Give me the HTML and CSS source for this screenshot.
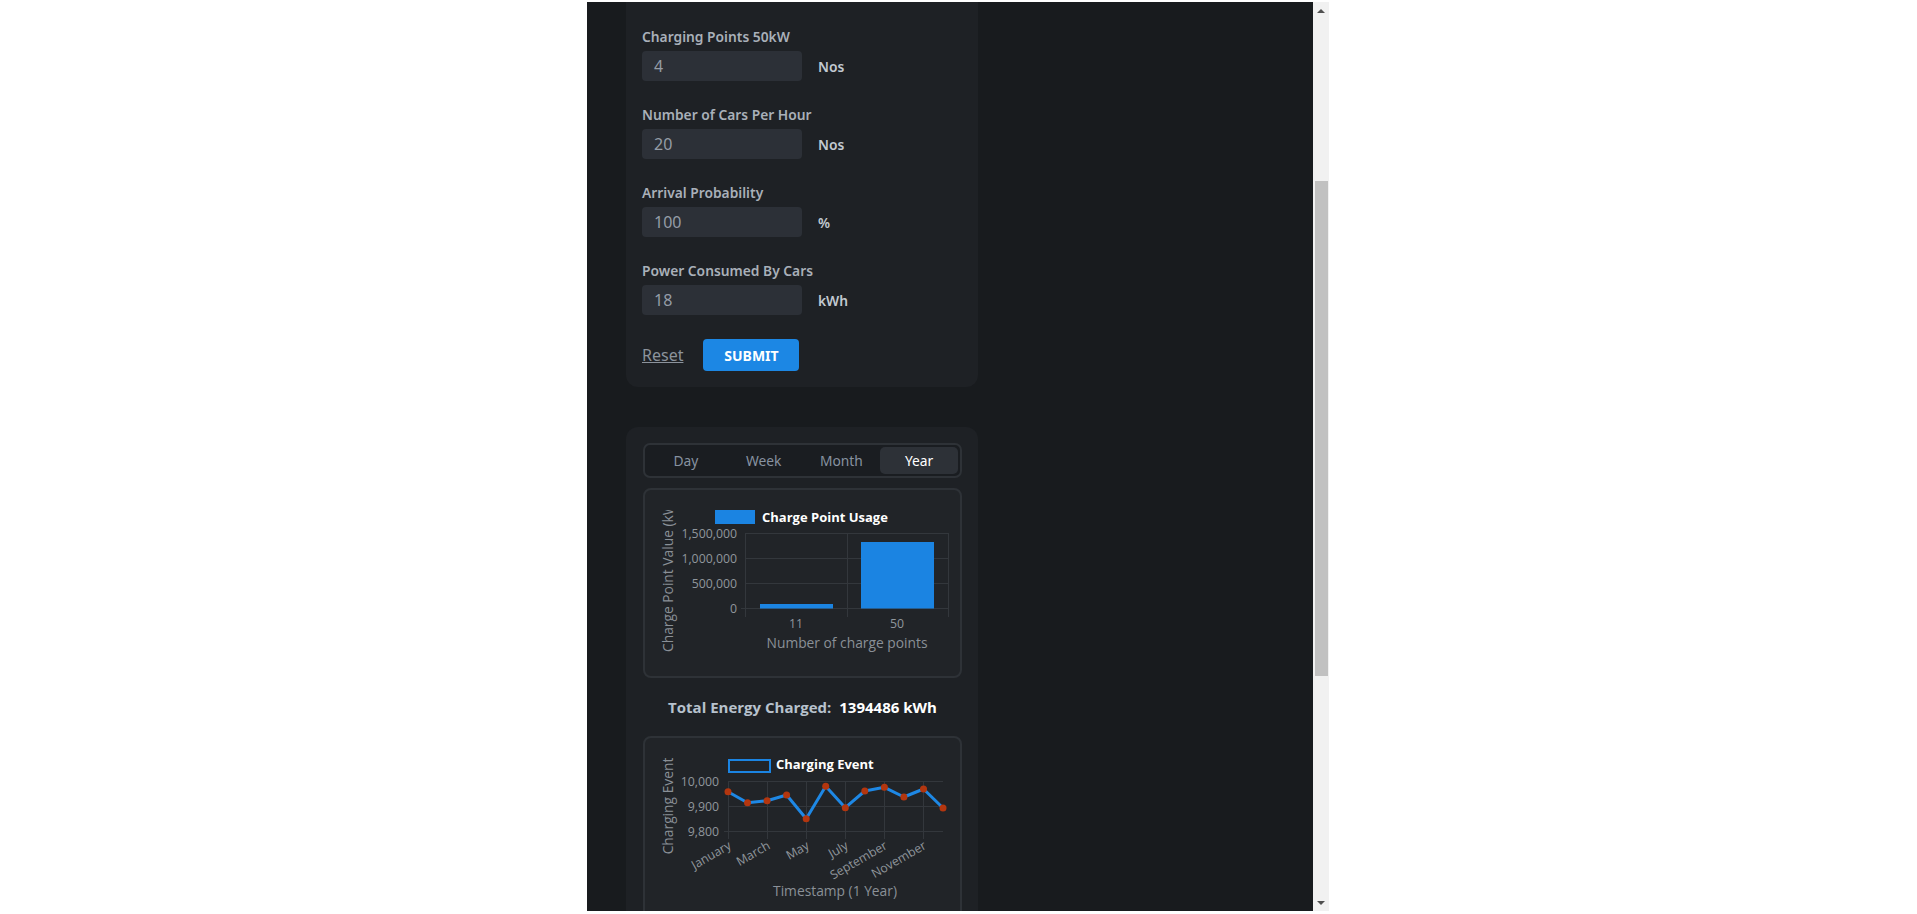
FILE: index.html
```html
<!DOCTYPE html>
<html lang="en">
<head>
<meta charset="utf-8">
<title>Charging Simulation</title>
<link rel="stylesheet" href="styles.css">
</head>
<body>
<div class="frame">
  <div class="viewport">
    <div class="column">
      <section class="card form-card">
        <div class="field">
          <label class="field-label">Charging Points 50kW</label>
          <div class="field-row"><div class="input">4</div><span class="unit">Nos</span></div>
        </div>
        <div class="field">
          <label class="field-label">Number of Cars Per Hour</label>
          <div class="field-row"><div class="input">20</div><span class="unit">Nos</span></div>
        </div>
        <div class="field">
          <label class="field-label">Arrival Probability</label>
          <div class="field-row"><div class="input">100</div><span class="unit">%</span></div>
        </div>
        <div class="field">
          <label class="field-label">Power Consumed By Cars</label>
          <div class="field-row"><div class="input">18</div><span class="unit">kWh</span></div>
        </div>
        <div class="actions">
          <a class="reset" href="#">Reset</a>
          <button class="submit" type="button">SUBMIT</button>
        </div>
      </section>

      <section class="card results-card">
        <div class="tabs">
          <div class="tab">Day</div>
          <div class="tab">Week</div>
          <div class="tab">Month</div>
          <div class="tab active">Year</div>
        </div>

        <div class="chart-box">
          <svg class="chart" width="315" height="186" viewBox="0 0 315 186">
            <defs>
              <clipPath id="ytclip"><rect x="0" y="20" width="60" height="170"/></clipPath>
            </defs>
            <rect x="70" y="20" width="40" height="14" fill="#1b84e2"/>
            <text x="117" y="31.5" class="legend">Charge Point Usage</text>
            <g clip-path="url(#ytclip)">
              <text class="axis-title" transform="translate(28,162) rotate(-90)">Charge Point Value (kWh)</text>
            </g>
            <g class="grid">
              <line x1="100" y1="43.5" x2="303" y2="43.5"/>
              <line x1="100" y1="68.5" x2="303" y2="68.5"/>
              <line x1="100" y1="93.5" x2="303" y2="93.5"/>
              <line x1="96" y1="118.5" x2="303" y2="118.5"/>
              <line x1="100.5" y1="43" x2="100.5" y2="127"/>
              <line x1="202.5" y1="43" x2="202.5" y2="127"/>
              <line x1="303.5" y1="43" x2="303.5" y2="127"/>
            </g>
            <g class="tick" text-anchor="end">
              <text x="92" y="47.5">1,500,000</text>
              <text x="92" y="72.5">1,000,000</text>
              <text x="92" y="97.5">500,000</text>
              <text x="92" y="122.5">0</text>
            </g>
            <rect x="115" y="114" width="73" height="4.5" fill="#1b84e2"/>
            <rect x="216" y="52" width="73" height="66.5" fill="#1b84e2"/>
            <g class="tick" text-anchor="middle">
              <text x="151" y="137.5">11</text>
              <text x="252" y="137.5">50</text>
            </g>
            <text class="axis-title" x="202" y="158" text-anchor="middle">Number of charge points</text>
          </svg>
        </div>

        <p class="total"><span class="total-label">Total Energy Charged:</span> <span class="total-value">1394486 kWh</span></p>

        <div class="chart-box chart-box-2">
          <svg class="chart" width="315" height="186" viewBox="0 0 315 186">
            <rect x="84" y="22" width="41" height="12" fill="none" stroke="#1b84e2" stroke-width="2"/>
            <text x="131" y="30.5" class="legend">Charging Event</text>
            <text class="axis-title" transform="translate(28,68) rotate(-90)" text-anchor="middle">Charging Event</text>
            <g class="grid">
              <line x1="83" y1="43.5" x2="298" y2="43.5"/>
              <line x1="83" y1="68.5" x2="298" y2="68.5"/>
              <line x1="79" y1="93.5" x2="298" y2="93.5"/>
              <line x1="83.5" y1="43" x2="83.5" y2="101"/>
              <line x1="122.5" y1="43" x2="122.5" y2="101"/>
              <line x1="161.5" y1="43" x2="161.5" y2="101"/>
              <line x1="200.5" y1="43" x2="200.5" y2="101"/>
              <line x1="239.5" y1="43" x2="239.5" y2="101"/>
              <line x1="278.5" y1="43" x2="278.5" y2="101"/>
            </g>
            <g class="tick" text-anchor="end">
              <text x="74" y="47.5">10,000</text>
              <text x="74" y="72.5">9,900</text>
              <text x="74" y="97.5">9,800</text>
            </g>
            <polyline class="series" points="83,53.7 102.5,64.7 122.1,62.7 141.6,57 161.2,80.7 180.7,48.3 200.3,69.7 219.8,53 239.4,49.3 258.9,59 278.5,51 298,70"/>
            <g class="dots">
              <circle cx="83" cy="53.7" r="3.5"/>
              <circle cx="102.5" cy="64.7" r="3.5"/>
              <circle cx="122.1" cy="62.7" r="3.5"/>
              <circle cx="141.6" cy="57" r="3.5"/>
              <circle cx="161.2" cy="80.7" r="3.5"/>
              <circle cx="180.7" cy="48.3" r="3.5"/>
              <circle cx="200.3" cy="69.7" r="3.5"/>
              <circle cx="219.8" cy="53" r="3.5"/>
              <circle cx="239.4" cy="49.3" r="3.5"/>
              <circle cx="258.9" cy="59" r="3.5"/>
              <circle cx="278.5" cy="51" r="3.5"/>
              <circle cx="298" cy="70" r="3.5"/>
            </g>
            <g class="tick" text-anchor="end">
              <text transform="translate(87,110) rotate(-30)">January</text>
              <text transform="translate(126,110) rotate(-30)">March</text>
              <text transform="translate(165,110) rotate(-30)">May</text>
              <text transform="translate(204,110) rotate(-30)">July</text>
              <text transform="translate(243,110) rotate(-30)">September</text>
              <text transform="translate(282,110) rotate(-30)">November</text>
            </g>
            <text class="axis-title" x="190" y="158" text-anchor="middle">Timestamp (1 Year)</text>
          </svg>
        </div>
      </section>
    </div>
  </div>
  <div class="scrollbar">
    <div class="sb-btn"><span class="arrow-up"></span></div>
    <div class="sb-track"><div class="sb-thumb"></div></div>
    <div class="sb-btn"><span class="arrow-down"></span></div>
  </div>
</div>
</body>
</html>
```

FILE: styles.css
```css
html, body {
  margin: 0;
  padding: 0;
  background: #ffffff;
}

body {
  font-family: "Noto Sans", "Open Sans", sans-serif;
}

.frame {
  display: flex;
  width: 742px;
  height: 909px;
  margin: 2px 0 0 587px;
  overflow: hidden;
}

.viewport {
  flex: 1;
  background: #181b1e;
  padding-left: 39px;
  overflow: hidden;
}

.column {
  width: 352px;
  display: flex;
  flex-direction: column;
  gap: 40px;
}

.card {
  background: #1e2125;
  border-radius: 12px;
}

.form-card {
  border-radius: 0 0 12px 12px;
  padding: 25px 16px 16px;
}

.field {
  display: flex;
  flex-direction: column;
  gap: 4px;
  margin-bottom: 24px;
}

.field-label {
  font-family: "Noto Sans", sans-serif;
  font-weight: 600;
  font-size: 13.8px;
  line-height: 20px;
  color: #a9b0b9;
}

.field-row {
  display: flex;
  align-items: center;
  gap: 16px;
}

.input {
  box-sizing: border-box;
  width: 160px;
  height: 30px;
  padding-left: 12px;
  background: #2c3037;
  border-radius: 4px;
  color: #959da7;
  font-family: "Noto Sans", sans-serif;
  font-size: 16px;
  line-height: 30px;
}

.unit {
  font-family: "Noto Sans", sans-serif;
  font-weight: 600;
  font-size: 13.8px;
  color: #c2c9d1;
}

.actions {
  display: flex;
  align-items: center;
  gap: 20px;
}

.reset {
  font-family: "Noto Sans", sans-serif;
  font-size: 16px;
  color: #8c939c;
  text-decoration: underline;
}

.submit {
  width: 96px;
  height: 32px;
  border: none;
  border-radius: 4px;
  background: #1c87e4;
  color: #ffffff;
  font-family: "Noto Sans", sans-serif;
  font-weight: 700;
  font-size: 14px;
  padding: 0;
}

.results-card {
  padding: 16px 16px 40px 17px;
}

.tabs {
  box-sizing: border-box;
  width: 319px;
  height: 35px;
  display: flex;
  padding: 2px;
  border: 2px solid #2e3237;
  border-radius: 7px;
  background: #1a1d21;
}

.tab {
  flex: 1;
  display: flex;
  align-items: center;
  justify-content: center;
  border-radius: 5px;
  font-family: "Noto Sans", sans-serif;
  font-size: 13.8px;
  color: #8792a0;
}

.tab.active {
  background: #2d3137;
  color: #ffffff;
}

.chart-box {
  box-sizing: border-box;
  width: 319px;
  height: 190px;
  margin-top: 10px;
  border: 2px solid #2e3237;
  border-radius: 8px;
  background: #212428;
}

.chart {
  display: block;
  font-family: "Open Sans", sans-serif;
}

.legend {
  font-family: "Open Sans", sans-serif;
  font-weight: 700;
  font-size: 13px;
  fill: #ffffff;
}

.axis-title {
  font-size: 13.8px;
  fill: #8a9097;
}

.tick {
  font-size: 12.3px;
  fill: #90969c;
}

.grid line {
  stroke: #33373c;
  stroke-width: 1;
}

.series {
  fill: none;
  stroke: #1e88e5;
  stroke-width: 3;
  stroke-linejoin: round;
}

.dots circle {
  fill: #b3360f;
}

.total {
  margin: 19px 0 0;
  text-align: center;
  font-family: "Open Sans", sans-serif;
  font-weight: 700;
  font-size: 15px;
  line-height: 20px;
}

.total-label {
  color: #b7c2cd;
}

.total-value {
  color: #ffffff;
  margin-left: 4px;
}

.chart-box-2 {
  margin-top: 19px;
}

.scrollbar {
  width: 16px;
  background: #f1f1f1;
  display: flex;
  flex-direction: column;
}

.sb-btn {
  height: 17px;
  display: flex;
  align-items: center;
  justify-content: center;
}

.arrow-up {
  width: 0;
  height: 0;
  border-left: 4px solid transparent;
  border-right: 4px solid transparent;
  border-bottom: 4px solid #505050;
}

.arrow-down {
  width: 0;
  height: 0;
  border-left: 4px solid transparent;
  border-right: 4px solid transparent;
  border-top: 4px solid #505050;
}

.sb-track {
  flex: 1;
  padding-top: 162px;
}

.sb-thumb {
  height: 495px;
  margin: 0 1px 0 2px;
  background: #c1c1c1;
}
```
